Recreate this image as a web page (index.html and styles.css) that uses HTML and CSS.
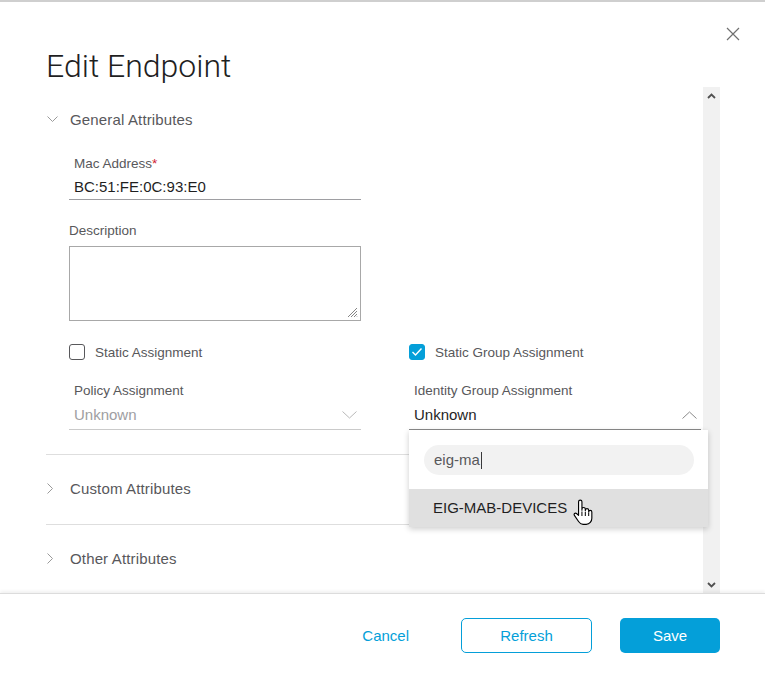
FILE: index.html
```html
<!DOCTYPE html>
<html>
<head>
    <link rel="stylesheet" href="styles.css">
</head>
<body>
    <div class="modal">
        <button class="close" aria-label="Close">
            <svg width="14" height="14" viewBox="0 0 14 14"><path d="M1 1 L13 13 M13 1 L1 13" stroke="#707070" stroke-width="1.2" fill="none"/></svg>
        </button>

        <div class="modal-header">
            <h1>Edit Endpoint</h1>
        </div>

        <div class="modal-body">
            <div class="body-content">
                <div class="section section-open">
                    <div class="section-head">
                        <span class="chev"><svg width="11" height="6" viewBox="0 0 11 6"><path d="M0.5 0.5 L5.5 5.5 L10.5 0.5" stroke="#9a9a9a" fill="none"/></svg></span>
                        General Attributes
                    </div>

                    <div class="form-grid">
                        <div class="field">
                            <div class="field-label">Mac Address<span class="req">*</span></div>
                            <div class="field-value">BC:51:FE:0C:93:E0</div>
                        </div>
                        <div></div>

                        <div class="field">
                            <div class="field-label flush">Description</div>
                            <div class="textarea">
                                <svg class="grip" width="11" height="11" viewBox="0 0 11 11"><path d="M10 1 L1 10 M10 4 L4 10 M10 7 L7 10 M10 9.5 L9.5 10" stroke="#777" stroke-width="0.9"/></svg>
                            </div>
                        </div>
                        <div></div>

                        <label class="check">
                            <span class="box"></span>
                            Static Assignment
                        </label>
                        <label class="check">
                            <span class="box checked">
                                <svg width="12" height="10" viewBox="0 0 12 10"><path d="M1.5 5 L4.5 8 L10.5 1.5" stroke="#fff" stroke-width="1.4" fill="none"/></svg>
                            </span>
                            Static Group Assignment
                        </label>

                        <div class="field">
                            <div class="field-label">Policy Assignment</div>
                            <div class="select disabled">
                                <span>Unknown</span>
                                <svg width="15" height="8" viewBox="0 0 15 8"><path d="M0.5 0.5 L7.5 7 L14.5 0.5" stroke="#b8b8b8" fill="none"/></svg>
                            </div>
                        </div>
                        <div class="field">
                            <div class="field-label">Identity Group Assignment</div>
                            <div class="select open">
                                <span>Unknown</span>
                                <svg width="15" height="8" viewBox="0 0 15 8"><path d="M0.5 7.5 L7.5 1 L14.5 7.5" stroke="#8a8a8a" fill="none"/></svg>
                                <div class="dropdown">
                                    <div class="search">eig-ma<span class="caret"></span></div>
                                    <div class="option">
                                        EIG-MAB-DEVICES
                                        <svg class="hand" width="21" height="27" viewBox="0 0 18 24"><path d="M5.5 2.5 a1.5 1.5 0 0 1 3 0 V10 V9 a1.5 1.5 0 0 1 3 0 V10.5 V10 a1.5 1.5 0 0 1 3 0 V11.5 V11.5 a1.4 1.4 0 0 1 2.8 0 V17 c0 3 -2 5.5 -5 5.5 H9.5 c-2 0 -3 -1 -4 -2.5 L1.8 14.5 c-0.8 -1.2 0.6 -2.6 1.9 -1.6 L5.5 14.5 Z" fill="#fff" stroke="#000" stroke-width="1" stroke-linejoin="round"/><path d="M8.5 11 V15 M11.5 11.5 V15 M14.5 12 V15" stroke="#000" stroke-width="0.9"/></svg>
                                    </div>
                                </div>
                            </div>
                        </div>
                    </div>
                </div>

                <div class="section">
                    <div class="section-head">
                        <span class="chev"><svg width="6" height="11" viewBox="0 0 6 11"><path d="M0.5 0.5 L5.5 5.5 L0.5 10.5" stroke="#9a9a9a" fill="none"/></svg></span>
                        Custom Attributes
                    </div>
                </div>

                <div class="section">
                    <div class="section-head">
                        <span class="chev"><svg width="6" height="11" viewBox="0 0 6 11"><path d="M0.5 0.5 L5.5 5.5 L0.5 10.5" stroke="#9a9a9a" fill="none"/></svg></span>
                        Other Attributes
                    </div>
                </div>
            </div>

            <div class="scrollbar">
                <svg width="9" height="6" viewBox="0 0 9 6"><path d="M1 5 L4.5 1.5 L8 5" stroke="#505050" stroke-width="1.8" fill="none"/></svg>
                <svg width="9" height="6" viewBox="0 0 9 6"><path d="M1 1 L4.5 4.5 L8 1" stroke="#505050" stroke-width="1.8" fill="none"/></svg>
            </div>
        </div>

        <div class="modal-footer">
            <button class="btn btn-link">Cancel</button>
            <button class="btn btn-outline">Refresh</button>
            <button class="btn btn-primary">Save</button>
        </div>
    </div>
</body>
</html>
```

FILE: styles.css
```css
body {
    margin: 0;
    background: #fff;
    color: #39393b;
    font-family: "Liberation Sans", Arial, sans-serif;
}
.modal {
    position: relative;
    width: 765px;
    height: 677px;
    box-sizing: border-box;
    border-top: 2px solid #cfcfcf;
    display: flex;
    flex-direction: column;
    overflow: hidden;
}
.close {
    position: absolute;
    top: 25px;
    right: 25px;
    width: 14px;
    height: 14px;
    padding: 0;
    border: none;
    background: none;
    cursor: pointer;
}
.modal-header {
    height: 85px;
    box-sizing: border-box;
    padding: 46px 0 0 46px;
}
.modal-header h1 {
    margin: 0;
    font-family: Roboto, "Liberation Sans", sans-serif;
    font-weight: 300;
    font-size: 32px;
    line-height: 36px;
    color: #1f1f1f;
}
.modal-body {
    display: flex;
    height: 506px;
}
.body-content {
    flex: 1;
    padding-left: 46px;
}
.scrollbar {
    width: 17px;
    margin-right: 45px;
    background: #f1f1f1;
    display: flex;
    flex-direction: column;
    justify-content: space-between;
    align-items: center;
    padding: 6px 0 5px;
    box-sizing: border-box;
}
.section {
    border-top: 1px solid #dedede;
    padding: 22px 0 25px;
}
.section-open {
    border-top: none;
    padding: 21px 0 24px;
}
.section-head {
    display: flex;
    align-items: center;
    height: 22px;
    font-size: 15px;
    letter-spacing: 0.15px;
    color: #58585b;
}
.chev {
    width: 23px;
    display: flex;
    align-items: center;
    padding-left: 1px;
}
.form-grid {
    margin: 26px 0 0 23px;
    display: grid;
    grid-template-columns: 292px 292px;
    column-gap: 48px;
    row-gap: 23px;
}
.field {
    position: relative;
}
.field-label {
    font-size: 13.5px;
    line-height: 16px;
    color: #58585b;
    padding-left: 5px;
}
.field-label.flush {
    padding-left: 0;
}
.req {
    color: #cf2030;
}
.field-value {
    margin-top: 4px;
    padding: 0 0 1px 5px;
    font-size: 15px;
    line-height: 22px;
    color: #1f1f1f;
    border-bottom: 1px solid #9e9ea2;
}
.textarea {
    position: relative;
    margin-top: 7px;
    height: 75px;
    box-sizing: border-box;
    border: 1px solid #a8a8a8;
}
.grip {
    position: absolute;
    right: 2px;
    bottom: 2px;
}
.check {
    display: flex;
    align-items: center;
    height: 16px;
    font-size: 13.5px;
    color: #58585b;
}
.box {
    width: 16px;
    height: 16px;
    box-sizing: border-box;
    border: 1px solid #58585b;
    border-radius: 3px;
    margin-right: 10px;
    display: flex;
    align-items: center;
    justify-content: center;
}
.box.checked {
    background: #049fd9;
    border-color: #049fd9;
}
.select {
    position: relative;
    margin-top: 5px;
    padding: 0 4px 3px 5px;
    display: flex;
    justify-content: space-between;
    align-items: center;
    font-size: 15px;
    line-height: 22px;
    color: #1f1f1f;
    border-bottom: 1px solid #8a8a8a;
}
.select.disabled {
    color: #9e9ea2;
    border-bottom-color: #cacaca;
}
.dropdown {
    position: absolute;
    top: 100%;
    left: 0;
    width: 299px;
    margin-top: 1px;
    z-index: 2;
    background: #fff;
    box-shadow: 0 2px 6px rgba(0, 0, 0, 0.2);
    padding-top: 15px;
}
.search {
    margin: 0 14px 14px 15px;
    height: 30px;
    border-radius: 15px;
    background: #f2f2f2;
    padding-left: 10px;
    display: flex;
    align-items: center;
    font-size: 15px;
    color: #58585b;
}
.caret {
    width: 1px;
    height: 17px;
    background: #39393b;
    margin-left: 1px;
}
.option {
    height: 38px;
    background: #e0e0e0;
    padding-left: 24px;
    display: flex;
    align-items: center;
    font-size: 15px;
    color: #1f1f1f;
}
.hand {
    margin: 8px 0 0 5px;
}
.modal-footer {
    flex: 1;
    display: flex;
    justify-content: flex-end;
    align-items: flex-start;
    padding: 24px 45px 0 0;
    border-top: 1px solid #dcdcdc;
    box-shadow: 0 -2px 3px rgba(0, 0, 0, 0.06);
    background: #fff;
    position: relative;
}
.btn {
    height: 35px;
    font-family: inherit;
    font-size: 15px;
    border-radius: 5px;
    cursor: pointer;
}
.btn-link {
    background: none;
    border: none;
    color: #049fd9;
    padding: 0 26px;
}
.btn-outline {
    width: 131px;
    margin-left: 26px;
    background: #fff;
    border: 1px solid #049fd9;
    color: #049fd9;
}
.btn-primary {
    width: 100px;
    margin-left: 28px;
    background: #049fd9;
    border: none;
    color: #fff;
}
```
